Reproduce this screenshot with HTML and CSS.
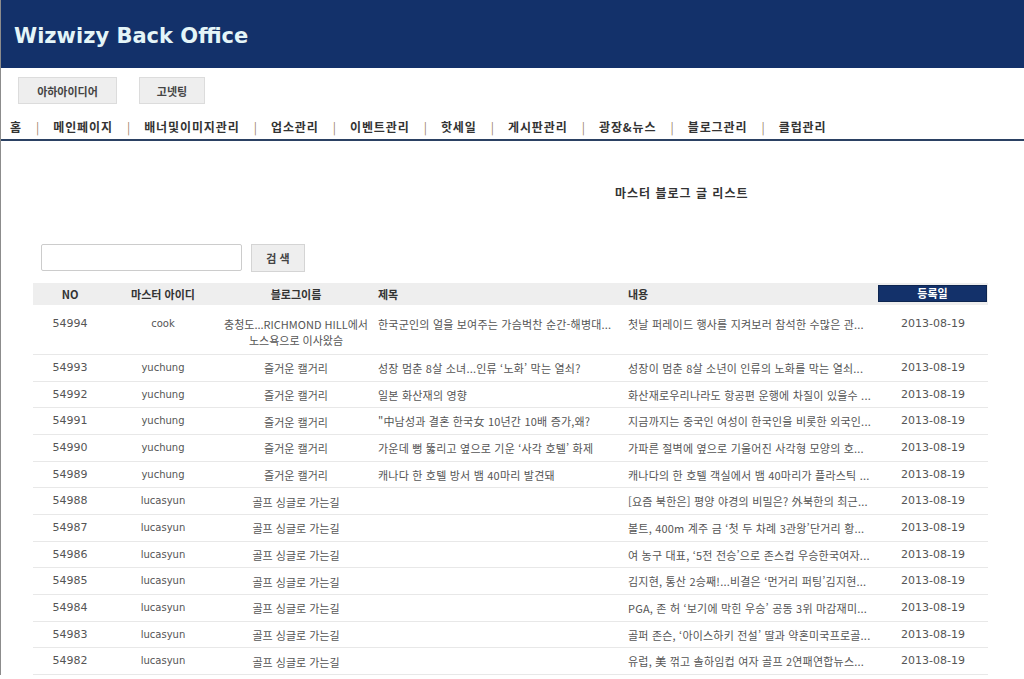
FILE: index.html
```html
<!DOCTYPE html>
<html lang="ko">
<head>
<meta charset="utf-8">
<title>Wizwizy Back Office</title>
<link rel="stylesheet" href="styles.css">
</head>
<body>
<header class="topbar">
  <h1 class="brand">Wizwizy Back Office</h1>
</header>
<div class="site-tabs">
  <button class="tab-btn tab-wide">아하아이디어</button>
  <button class="tab-btn tab-narrow">고넷팅</button>
</div>
<nav class="menu">
  <a class="menu-item">홈</a><span class="sep">|</span>
  <a class="menu-item">메인페이지</a><span class="sep">|</span>
  <a class="menu-item">배너및이미지관리</a><span class="sep">|</span>
  <a class="menu-item">업소관리</a><span class="sep">|</span>
  <a class="menu-item">이벤트관리</a><span class="sep">|</span>
  <a class="menu-item">핫세일</a><span class="sep">|</span>
  <a class="menu-item">게시판관리</a><span class="sep">|</span>
  <a class="menu-item">광장&amp;뉴스</a><span class="sep">|</span>
  <a class="menu-item">블로그관리</a><span class="sep">|</span>
  <a class="menu-item">클럽관리</a>
</nav>
<main class="content">
  <h2 class="page-title">마스터 블로그 글 리스트</h2>
  <form class="search">
    <input class="search-input" type="text">
    <button class="search-btn" type="button">검 색</button>
  </form>
  <table class="list">
    <colgroup>
      <col class="c-no"><col class="c-id"><col class="c-blog"><col class="c-title"><col class="c-body"><col class="c-date">
    </colgroup>
    <thead>
      <tr>
        <th class="center">NO</th>
        <th class="center">마스터 아이디</th>
        <th class="center">블로그이름</th>
        <th class="left">제목</th>
        <th class="left">내용</th>
        <th class="center th-date"><span class="date-head">등록일</span></th>
      </tr>
    </thead>
    <tbody>
      <tr class="row-first">
        <td class="no">54994</td><td class="uid">cook</td><td class="blog">충청도...RICHMOND HILL에서 노스욕으로 이사왔슴</td>
        <td class="txt">한국군인의 얼을 보여주는 가슴벅찬 순간-해병대...</td><td class="txt">첫날 퍼레이드 행사를 지켜보러 참석한 수많은 관...</td><td class="date">2013-08-19</td>
      </tr>
      <tr><td class="no">54993</td><td class="uid">yuchung</td><td class="blog">즐거운 캘거리</td><td class="txt">성장 멈춘 8살 소녀...인류 ‘노화’ 막는 열쇠?</td><td class="txt">성장이 멈춘 8살 소년이 인류의 노화를 막는 열쇠...</td><td class="date">2013-08-19</td></tr>
      <tr><td class="no">54992</td><td class="uid">yuchung</td><td class="blog">즐거운 캘거리</td><td class="txt">일본 화산재의 영향</td><td class="txt">화산재로우리나라도 항공편 운행에 차질이 있을수 ...</td><td class="date">2013-08-19</td></tr>
      <tr><td class="no">54991</td><td class="uid">yuchung</td><td class="blog">즐거운 캘거리</td><td class="txt">"中남성과 결혼 한국女 10년간 10배 증가,왜?</td><td class="txt">지금까지는 중국인 여성이 한국인을 비롯한 외국인...</td><td class="date">2013-08-19</td></tr>
      <tr><td class="no">54990</td><td class="uid">yuchung</td><td class="blog">즐거운 캘거리</td><td class="txt">가운데 뻥 뚫리고 옆으로 기운 ‘사각 호텔’ 화제</td><td class="txt">가파른 절벽에 옆으로 기울어진 사각형 모양의 호...</td><td class="date">2013-08-19</td></tr>
      <tr><td class="no">54989</td><td class="uid">yuchung</td><td class="blog">즐거운 캘거리</td><td class="txt">캐나다 한 호텔 방서 뱀 40마리 발견돼</td><td class="txt">캐나다의 한 호텔 객실에서 뱀 40마리가 플라스틱 ...</td><td class="date">2013-08-19</td></tr>
      <tr><td class="no">54988</td><td class="uid">lucasyun</td><td class="blog">골프 싱글로 가는길</td><td class="txt"></td><td class="txt">[요즘 북한은] 평양 야경의 비밀은? 外북한의 최근...</td><td class="date">2013-08-19</td></tr>
      <tr><td class="no">54987</td><td class="uid">lucasyun</td><td class="blog">골프 싱글로 가는길</td><td class="txt"></td><td class="txt">볼트, 400m 계주 금 ‘첫 두 차례 3관왕’단거리 황...</td><td class="date">2013-08-19</td></tr>
      <tr><td class="no">54986</td><td class="uid">lucasyun</td><td class="blog">골프 싱글로 가는길</td><td class="txt"></td><td class="txt">여 농구 대표, ‘5전 전승’으로 존스컵 우승한국여자...</td><td class="date">2013-08-19</td></tr>
      <tr><td class="no">54985</td><td class="uid">lucasyun</td><td class="blog">골프 싱글로 가는길</td><td class="txt"></td><td class="txt">김지현, 통산 2승째!...비결은 ‘먼거리 퍼팅’김지현...</td><td class="date">2013-08-19</td></tr>
      <tr><td class="no">54984</td><td class="uid">lucasyun</td><td class="blog">골프 싱글로 가는길</td><td class="txt"></td><td class="txt">PGA, 존 허 ‘보기에 막힌 우승’ 공동 3위 마감재미...</td><td class="date">2013-08-19</td></tr>
      <tr><td class="no">54983</td><td class="uid">lucasyun</td><td class="blog">골프 싱글로 가는길</td><td class="txt"></td><td class="txt">골퍼 존슨, ‘아이스하키 전설’ 딸과 약혼미국프로골...</td><td class="date">2013-08-19</td></tr>
      <tr><td class="no">54982</td><td class="uid">lucasyun</td><td class="blog">골프 싱글로 가는길</td><td class="txt"></td><td class="txt">유럽, 美 꺾고 솔하임컵 여자 골프 2연패연합뉴스...</td><td class="date">2013-08-19</td></tr>
    </tbody>
  </table>
</main>
</body>
</html>
```

FILE: styles.css
```css
html {
  overflow: hidden;
}
body {
  margin: 0;
  border-left: 1px solid #8c8c8c;
  background: #ffffff;
  font-family: "Noto Sans CJK KR", "DejaVu Sans", sans-serif;
  color: #555555;
  font-size: 11px;
}

.topbar {
  height: 68px;
  box-sizing: border-box;
  background: #13316a;
  display: flex;
  align-items: center;
  padding: 4px 0 0 13px;
}
.brand {
  margin: 0;
  font-family: "DejaVu Sans", sans-serif;
  font-weight: bold;
  font-size: 21px;
  color: #e4f5f8;
}

.site-tabs {
  display: flex;
  gap: 22px;
  padding: 9px 0 0 17px;
}
.tab-btn {
  height: 27px;
  margin: 0;
  padding: 0;
  background: #eeeeee;
  border: 1px solid #dcdcdc;
  font-family: "Noto Sans CJK KR", sans-serif;
  font-weight: bold;
  font-size: 11px;
  color: #444444;
}
.tab-wide { width: 99px; }
.tab-narrow { width: 66px; }

.menu {
  display: flex;
  align-items: center;
  height: 25px;
  margin-top: 10px;
  padding-left: 9px;
  border-bottom: 2px solid #2b4163;
  font-weight: bold;
  font-size: 12px;
  letter-spacing: 0.9px;
  color: #333333;
}
.menu-item {
  color: #333333;
}
.sep {
  margin: 0 14px;
  font-weight: normal;
  letter-spacing: 0;
  color: #9b8467;
}

.content {
  padding: 0 0 0 32px;
}
.page-title {
  margin: 44px 0 0 0;
  padding-left: 582px;
  font-size: 12px;
  font-weight: bold;
  letter-spacing: 1px;
  color: #333333;
  line-height: 16px;
}

.search {
  display: flex;
  gap: 9px;
  margin: 43px 0 0 8px;
}
.search-input {
  width: 201px;
  height: 27px;
  box-sizing: border-box;
  margin: 0;
  border: 1px solid #cccccc;
  border-radius: 2px;
}
.search-btn {
  width: 54px;
  height: 28px;
  margin: 0;
  padding: 0;
  background: #eeeeee;
  border: 1px solid #d4d4d4;
  font-family: "Noto Sans CJK KR", sans-serif;
  font-weight: bold;
  font-size: 11px;
  color: #444444;
}

.list {
  margin-top: 11px;
  width: 955px;
  border-collapse: collapse;
  table-layout: fixed;
}
.c-no { width: 74px; }
.c-id { width: 112px; }
.c-blog { width: 154px; }
.c-title { width: 250px; }
.c-body { width: 255px; }
.c-date { width: 110px; }

.list th {
  padding: 0 5px;
  line-height: 16px;
  background: #eeeeee;
  font-size: 11px;
  font-weight: bold;
  color: #333333;
}
.list th.center { text-align: center; }
.list th.left { text-align: left; }
.list th.th-date { padding: 2px 1px 3px 0; }
.date-head {
  display: block;
  height: 17px;
  line-height: 15px;
  background: #13316a;
  color: #ffffff;
  border: 1px solid #0d2550;
  box-sizing: border-box;
}

.list td {
  padding: 5px 5px 4px;
  line-height: 16.67px;
  border-bottom: 1px solid #e8e8e8;
  white-space: nowrap;
  overflow: hidden;
  vertical-align: middle;
  color: #555555;
}
.list tr.row-first td {
  vertical-align: top;
  padding-top: 11px;
  padding-bottom: 6px;
}
.list td.no,
.list td.date {
  font-family: "DejaVu Sans", sans-serif;
  text-align: center;
}
.list td.uid {
  font-family: "DejaVu Sans", sans-serif;
  font-size: 10px;
  text-align: center;
}
.list td.blog {
  text-align: center;
  white-space: normal;
  line-height: 16px;
}
.list td.txt {
  text-align: left;
  letter-spacing: 0.2px;
}
```
